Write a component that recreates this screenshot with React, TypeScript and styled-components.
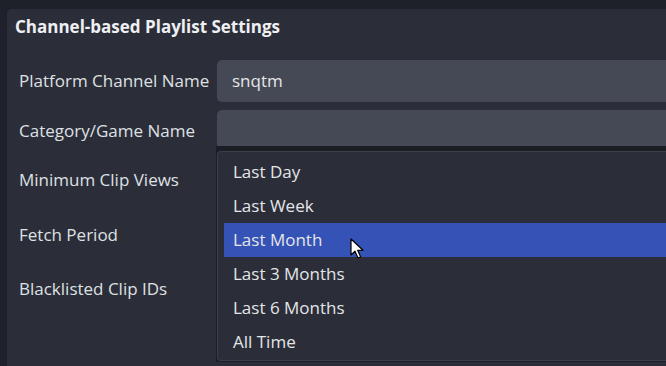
import React from "react";
import styled, { createGlobalStyle } from "styled-components";

const Global = createGlobalStyle`
  html, body { margin: 0; padding: 0; background: #1f212a; overflow: hidden; }
  body { font-family: "Open Sans", "Noto Sans", sans-serif; color: #e3e4e8; }
  * { box-sizing: border-box; }
`;

const Page = styled.div`
  width: 666px;
  height: 366px;
  padding: 9px 0 0 7px;
  background: #1f212a;
`;

const Panel = styled.div`
  position: relative;
  height: 100%;
  background: #2b2e38;
  border-radius: 5px 0 0 0;
  padding: 8px 0 0 8px;
`;

const Title = styled.div`
  font-weight: 700;
  font-size: 17px;
  line-height: 20px;
  color: #eef0f3;
  margin-bottom: 23px;
`;

const Form = styled.div`
  display: flex;
  flex-direction: column;
  gap: 8px;
`;

const Row = styled.div<{ $h: number }>`
  display: grid;
  grid-template-columns: 202px 1fr;
  align-items: center;
  height: ${(p) => p.$h}px;
`;

const Label = styled.div`
  font-size: 17px;
  padding: 0 0 2px 4px;
  color: #dfe0e4;
`;

const Field = styled.div`
  height: 100%;
  background: #454955;
  border-radius: 5px 0 0 5px;
  display: flex;
  align-items: center;
  padding: 0 0 2px 15px;
  font-size: 17px;
  color: #e6e7ea;
`;

const Popup = styled.div`
  position: absolute;
  left: 209px;
  top: 137px;
  right: 0;
  height: 216px;
  background: #1c1e26;
  padding: 5px 0 1px 1px;
`;

const List = styled.div`
  height: 100%;
  background: #2b2e38;
  border: 1px solid #3c3f4a;
  border-right: none;
  border-radius: 4px 0 0 4px;
  padding: 3px 0 0 6px;
  display: flex;
  flex-direction: column;
`;

const Item = styled.div<{ $sel?: boolean }>`
  position: relative;
  height: 34px;
  flex: none;
  display: flex;
  align-items: center;
  padding: 0 0 2px 9px;
  font-size: 17px;
  color: #e4e5e8;
  background: ${(p) => (p.$sel ? "#3553b6" : "transparent")};
`;

const Cursor = styled.svg`
  position: absolute;
  left: 126px;
  top: 15px;
`;

const items = ["Last Day", "Last Week", "Last Month", "Last 3 Months", "Last 6 Months", "All Time"];

export default function App() {
  return (
    <>
      <Global />
      <Page>
        <Panel>
          <Title>Channel-based Playlist Settings</Title>
          <Form>
            <Row $h={42}>
              <Label>Platform Channel Name</Label>
              <Field>snqtm</Field>
            </Row>
            <Row $h={42}>
              <Label>Category/Game Name</Label>
              <Field />
            </Row>
            <Row $h={40}>
              <Label>Minimum Clip Views</Label>
              <Field />
            </Row>
            <Row $h={54}>
              <Label>Fetch Period</Label>
              <Field />
            </Row>
            <Row $h={38}>
              <Label>Blacklisted Clip IDs</Label>
              <Field />
            </Row>
          </Form>
          <Popup>
            <List>
              {items.map((t) => (
                <Item key={t} $sel={t === "Last Month"}>
                  {t}
                  {t === "Last Month" && (
                    <Cursor width="14" height="22" viewBox="0 0 14 22">
                      <path d="M1 1 L1 17 L5 13.2 L8 20 L10.6 18.8 L7.7 12.3 L13 12.3 Z" fill="#fff" stroke="#000" strokeWidth="1.2" strokeLinejoin="round" />
                    </Cursor>
                  )}
                </Item>
              ))}
            </List>
          </Popup>
        </Panel>
      </Page>
    </>
  );
}
